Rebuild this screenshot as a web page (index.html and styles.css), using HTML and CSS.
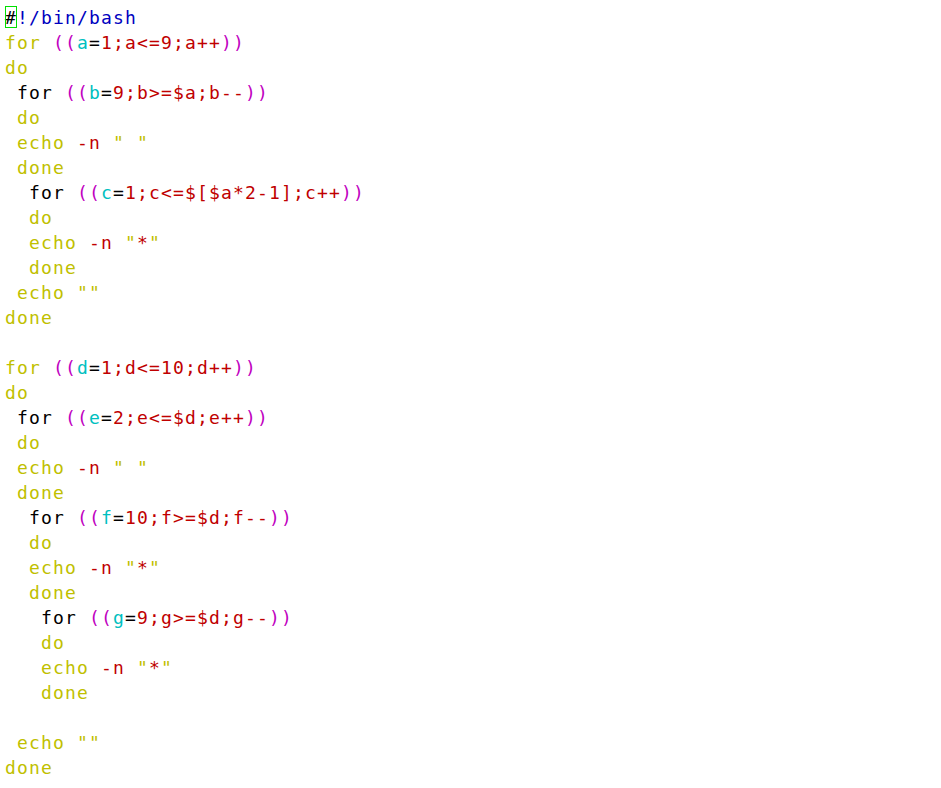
FILE: index.html
```html
<!DOCTYPE html>
<html>
<head>
<meta charset="utf-8">
<link rel="stylesheet" href="styles.css">
</head>
<body>
<pre class="code"><span class="cur">#</span><span class="b">!/bin/bash</span>
<span class="k">for</span> <span class="p">((</span><span class="v">a</span>=<span class="n">1;a&lt;=9;a++</span><span class="p">))</span>
<span class="k">do</span>
 for <span class="p">((</span><span class="v">b</span>=<span class="n">9;b&gt;=$a;b--</span><span class="p">))</span>
 <span class="k">do</span>
 <span class="k">echo</span> <span class="n">-n</span> <span class="k">" "</span>
 <span class="k">done</span>
  for <span class="p">((</span><span class="v">c</span>=<span class="n">1;c&lt;=$[$a*2-1];c++</span><span class="p">))</span>
  <span class="k">do</span>
  <span class="k">echo</span> <span class="n">-n</span> <span class="k">"</span><span class="n">*</span><span class="k">"</span>
  <span class="k">done</span>
 <span class="k">echo</span> <span class="k">""</span>
<span class="k">done</span>

<span class="k">for</span> <span class="p">((</span><span class="v">d</span>=<span class="n">1;d&lt;=10;d++</span><span class="p">))</span>
<span class="k">do</span>
 for <span class="p">((</span><span class="v">e</span>=<span class="n">2;e&lt;=$d;e++</span><span class="p">))</span>
 <span class="k">do</span>
 <span class="k">echo</span> <span class="n">-n</span> <span class="k">" "</span>
 <span class="k">done</span>
  for <span class="p">((</span><span class="v">f</span>=<span class="n">10;f&gt;=$d;f--</span><span class="p">))</span>
  <span class="k">do</span>
  <span class="k">echo</span> <span class="n">-n</span> <span class="k">"</span><span class="n">*</span><span class="k">"</span>
  <span class="k">done</span>
   for <span class="p">((</span><span class="v">g</span>=<span class="n">9;g&gt;=$d;g--</span><span class="p">))</span>
   <span class="k">do</span>
   <span class="k">echo</span> <span class="n">-n</span> <span class="k">"</span><span class="n">*</span><span class="k">"</span>
   <span class="k">done</span>

 <span class="k">echo</span> <span class="k">""</span>
<span class="k">done</span></pre>
</body>
</html>
```
FILE: styles.css
```css
html, body {
  margin: 0;
  padding: 0;
  background: #ffffff;
}

.code {
  margin: 0;
  padding: 5px 0 0 5px;
  font-family: "DejaVu Sans Mono", "Liberation Mono", monospace;
  font-size: 18px;
  letter-spacing: 1.16px;
  line-height: 25px;
  color: #000000;
  white-space: pre;
}

.k { color: #c0c000; }
.p { color: #c000c0; }
.v { color: #00c0c0; }
.n { color: #c00000; }
.b { color: #0000c0; }

.cur {
  padding-top: 1px;
  outline: 1px solid #00e000;
  outline-offset: -1px;
}
```
